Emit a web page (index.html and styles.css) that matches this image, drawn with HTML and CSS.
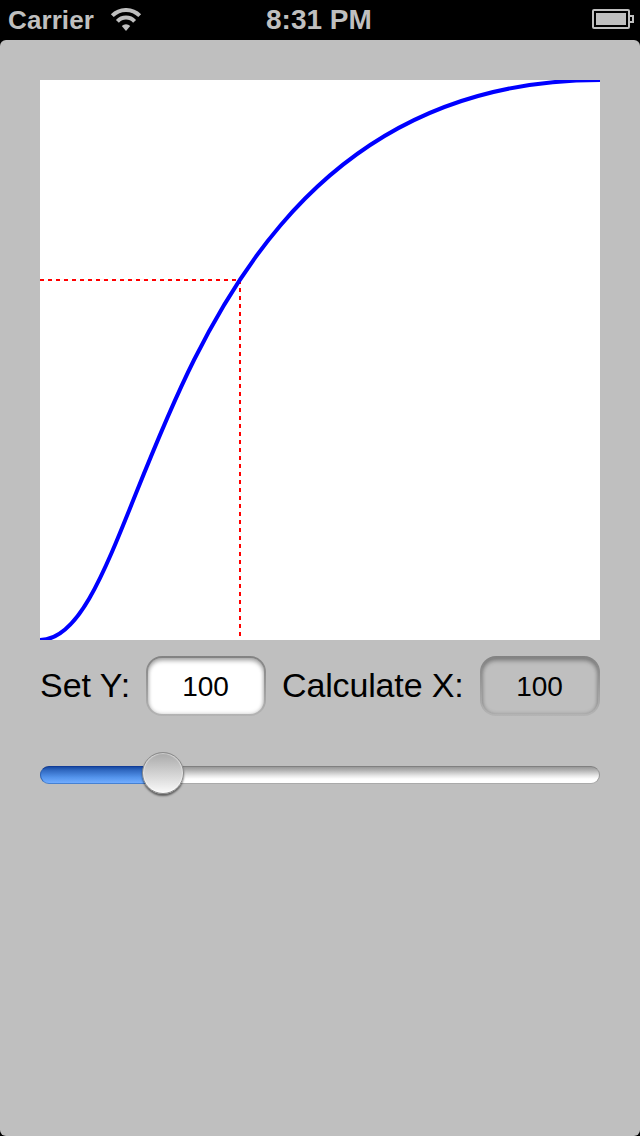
FILE: index.html
```
<!DOCTYPE html>
<html lang="en">
<head>
  <meta charset="UTF-8">
  <title>Bezier Curve</title>
  <link rel="stylesheet" href="styles.css">
</head>
<body>
  <header class="status-bar">
    <div class="carrier">
      <span>Carrier</span>
      <svg class="wifi" width="32" height="24" viewBox="0 0 32 24">
        <path d="M2.3 7.7 A19.3 19.3 0 0 1 29.7 7.7" />
        <path d="M7.4 13.3 A11.6 11.6 0 0 1 24.6 13.3" />
        <path class="dot" d="M11.8 18 A6 6 0 0 1 20.2 18 L16 23 Z" />
      </svg>
    </div>
    <div class="clock">8:31 PM</div>
    <div class="battery">
      <svg width="42" height="20" viewBox="0 0 42 20">
        <rect x="1" y="1" width="36" height="18" rx="1" />
        <rect class="level" x="4" y="4" width="30" height="12" />
        <path d="M37 7 H41 V13 H37" />
      </svg>
    </div>
  </header>
  <main>
    <svg class="chart" width="560" height="560" viewBox="0 0 560 560">
      <path class="guide" d="M0 200 H200 V560" />
      <path class="curve" d="M0 560 C112 560 112 0 560 0" />
    </svg>
    <form class="fields" autocomplete="off">
      <label class="set-y" for="yValue">Set Y:</label>
      <input type="text" id="yValue" value="100">
      <label class="calc-x" for="xValue">Calculate X:</label>
      <input type="text" id="xValue" value="100" readonly>
    </form>
    <div class="slider">
      <div class="fill"></div>
      <div class="thumb"></div>
    </div>
  </main>
</body>
</html>
```
FILE: styles.css
```
* {
  box-sizing: border-box;
}
body {
  background: #000;
  font-family: "Liberation Sans", Arial, sans-serif;
  margin: 0;
  height: 1136px;
  overflow: hidden;
}
.status-bar {
  display: grid;
  grid-template-columns: 258px auto 1fr;
  height: 40px;
  padding: 0 6px 0 8px;
  color: #bfbfbf;
  font-weight: bold;
  line-height: 40px;
}
.carrier {
  display: flex;
  font-size: 26px;
  letter-spacing: 0.1px;
}
.wifi {
  margin: 8px 0 0 16px;
  fill: none;
  stroke: #bfbfbf;
  stroke-width: 4;
}
.wifi .dot {
  fill: #bfbfbf;
  stroke: none;
}
.clock {
  font-size: 28px;
}
.battery {
  display: flex;
  justify-content: flex-end;
  padding-top: 9px;
}
.battery svg {
  fill: none;
  stroke: #bfbfbf;
  stroke-width: 2;
}
.battery .level {
  fill: #bfbfbf;
  stroke: none;
}
main {
  background: #bfbfbf;
  height: 1096px;
  padding: 40px;
  border-radius: 6px;
}
.chart {
  display: block;
  background: #fff;
  overflow: hidden;
}
.guide {
  fill: none;
  stroke: #f00;
  stroke-width: 2;
  stroke-dasharray: 4 4;
}
.curve {
  fill: none;
  stroke: #00f;
  stroke-width: 4;
  shape-rendering: geometricPrecision;
}
.fields {
  display: flex;
  align-items: center;
  height: 60px;
  margin-top: 16px;
}
label {
  height: 60px;
  font-size: 34px;
  line-height: 58px;
  white-space: nowrap;
}
.set-y {
  width: 106px;
}
.calc-x {
  width: 198px;
  margin-left: 16px;
  letter-spacing: -0.15px;
}
input {
  width: 120px;
  height: 60px;
  padding: 2px 1px 0 0;
  border: 2px solid transparent;
  border-radius: 16px;
  background: linear-gradient(#fff, #fff) padding-box, linear-gradient(#828282, #b4b4b4) border-box;
  box-shadow: inset 0 3px 4px rgba(0, 0, 0, 0.28), inset 0 0 4px rgba(0, 0, 0, 0.2);
  color: #000;
  font-family: inherit;
  font-size: 28px;
  text-align: center;
  outline: none;
}
input[readonly] {
  background: linear-gradient(#bfbfbf, #bfbfbf) padding-box, linear-gradient(#828282, #b4b4b4) border-box;
}
.slider {
  position: relative;
  height: 18px;
  margin-top: 50px;
  border: 1px solid;
  border-color: #808080 #999 #aaa;
  border-radius: 9px;
  background: linear-gradient(#979797, #b2b2b2 20%, #e8e8e8 55%, #fff 75%);
}
.fill {
  width: 120px;
  height: 18px;
  margin: -1px 0 0 -1px;
  border: 1px solid;
  border-color: #103c98 #2860b8 #4681d2;
  border-radius: 9px 0 0 9px;
  background: linear-gradient(#174aa5, #3068c0 20%, #5494ec 65%, #72adff);
}
.thumb {
  position: absolute;
  left: 101px;
  top: -15px;
  width: 42px;
  height: 42px;
  border: 1px solid #8a8a8a;
  border-radius: 50%;
  background: linear-gradient(#a9a9a9, #fafafa);
  box-shadow: inset 0 0 1px 1px rgba(255, 255, 255, 0.45), 0 2px 2px rgba(0, 0, 0, 0.5);
}
```
